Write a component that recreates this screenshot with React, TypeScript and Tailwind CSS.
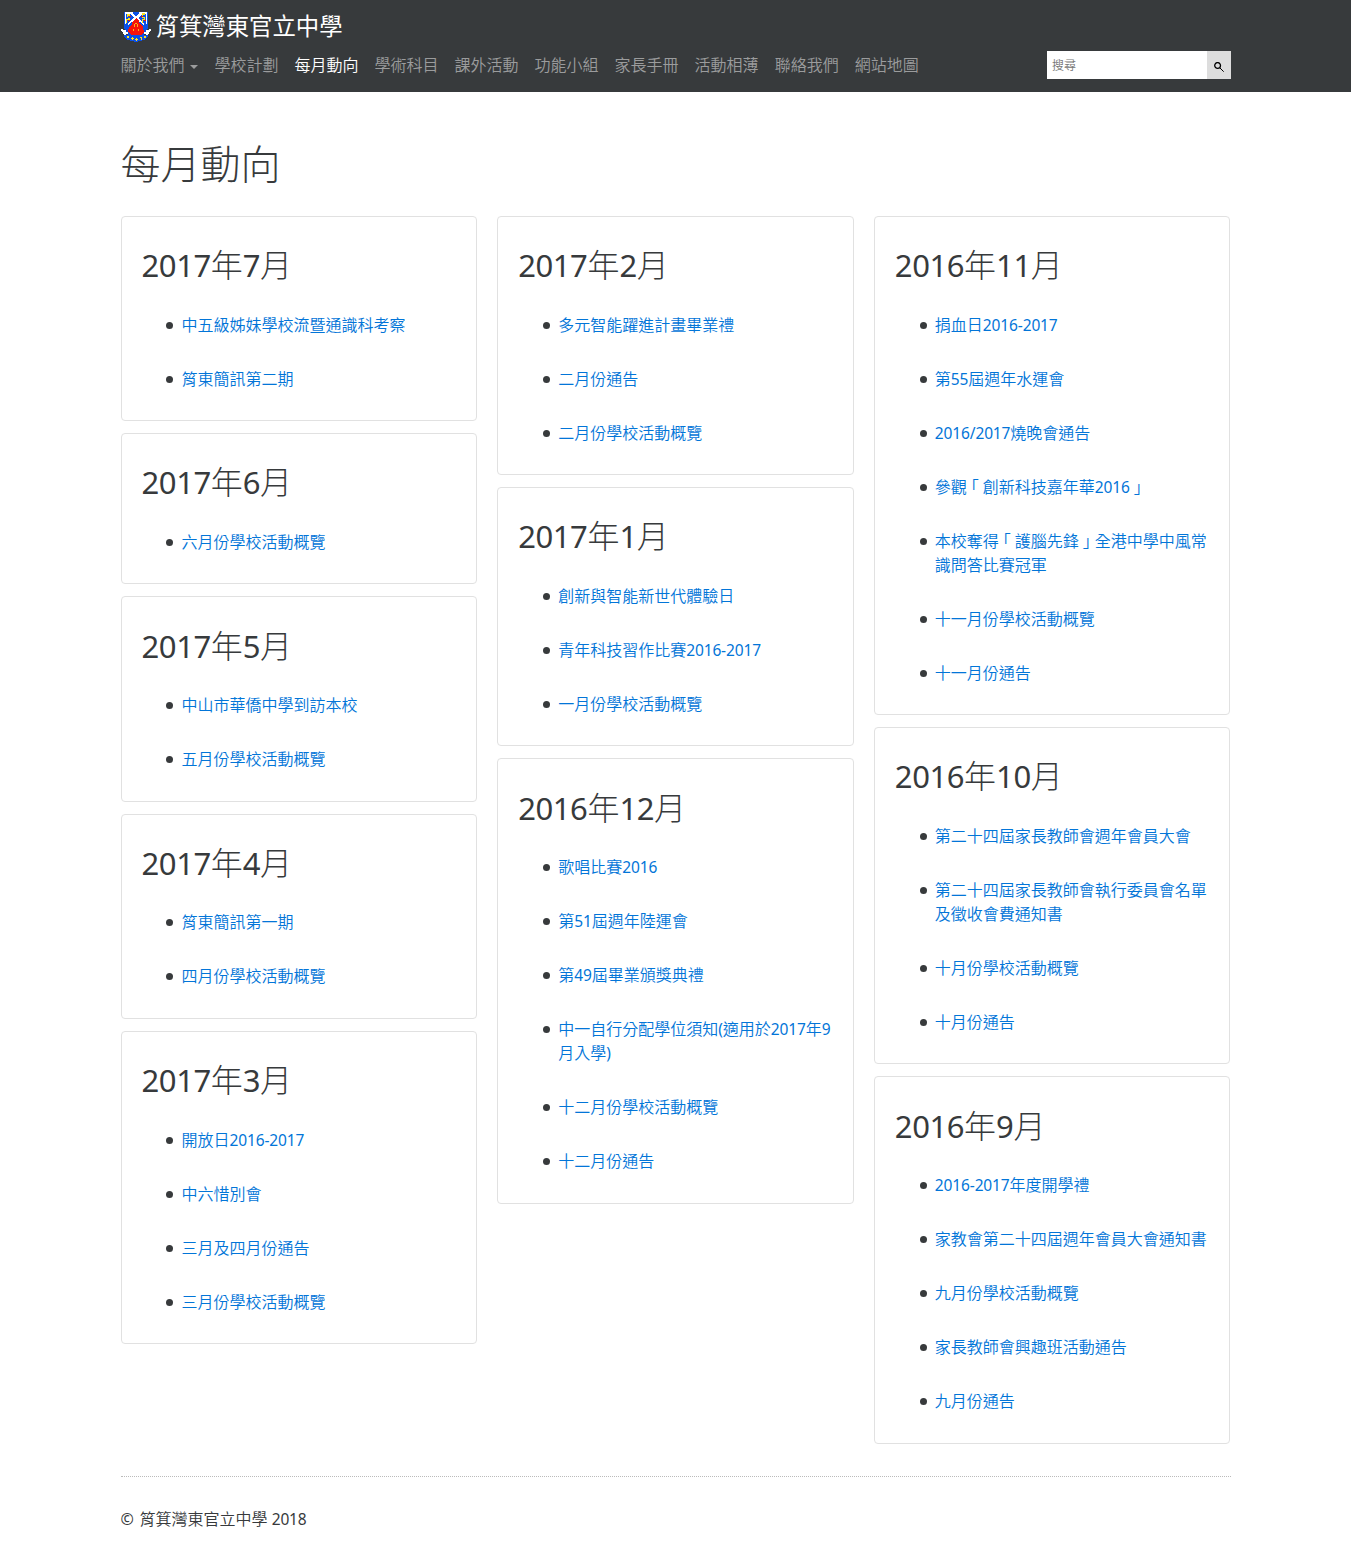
import React from "react";

type Month = { title: string; items: string[] };

const columns: Month[][] = [
  [
    { title: "2017年7月", items: ["中五級姊妹學校流暨通識科考察", "筲東簡訊第二期"] },
    { title: "2017年6月", items: ["六月份學校活動概覽"] },
    { title: "2017年5月", items: ["中山市華僑中學到訪本校", "五月份學校活動概覽"] },
    { title: "2017年4月", items: ["筲東簡訊第一期", "四月份學校活動概覽"] },
    { title: "2017年3月", items: ["開放日2016-2017", "中六惜別會", "三月及四月份通告", "三月份學校活動概覽"] },
  ],
  [
    { title: "2017年2月", items: ["多元智能躍進計畫畢業禮", "二月份通告", "二月份學校活動概覽"] },
    { title: "2017年1月", items: ["創新與智能新世代體驗日", "青年科技習作比賽2016-2017", "一月份學校活動概覽"] },
    {
      title: "2016年12月",
      items: [
        "歌唱比賽2016",
        "第51屆週年陸運會",
        "第49屆畢業頒獎典禮",
        "中一自行分配學位須知(適用於2017年9月入學)",
        "十二月份學校活動概覽",
        "十二月份通告",
      ],
    },
  ],
  [
    {
      title: "2016年11月",
      items: [
        "捐血日2016-2017",
        "第55屆週年水運會",
        "2016/2017燒晚會通告",
        "參觀「創新科技嘉年華2016」",
        "本校奪得「護腦先鋒」全港中學中風常識問答比賽冠軍",
        "十一月份學校活動概覽",
        "十一月份通告",
      ],
    },
    {
      title: "2016年10月",
      items: [
        "第二十四屆家長教師會週年會員大會",
        "第二十四屆家長教師會執行委員會名單及徵收會費通知書",
        "十月份學校活動概覽",
        "十月份通告",
      ],
    },
    {
      title: "2016年9月",
      items: [
        "2016-2017年度開學禮",
        "家教會第二十四屆週年會員大會通知書",
        "九月份學校活動概覽",
        "家長教師會興趣班活動通告",
        "九月份通告",
      ],
    },
  ],
];

const nav = ["關於我們", "學校計劃", "每月動向", "學術科目", "課外活動", "功能小組", "家長手冊", "活動相薄", "聯絡我們", "網站地圖"];

// Latin runs are set slightly tighter than the CJK text around them,
// and corner brackets use half-width glyphs centred in a full cell.
function Mixed({ text }: { text: string }) {
  return (
    <>
      {text.split(/([0-9\-/()]+|「|」)/).map((part, i) => {
        if (i % 2 === 0) return <React.Fragment key={i}>{part}</React.Fragment>;
        if (part === "「" || part === "」")
          return (
            <span key={i} className="inline-block w-4 text-center leading-5 [font-feature-settings:'halt']">{part}</span>
          );
        return (
          <span key={i} className="text-[0.97em] font-normal tracking-[-0.009em]">{part}</span>
        );
      })}
    </>
  );
}

function Crest() {
  return (
    <svg width="30" height="31" viewBox="0 0 30 31" shapeRendering="crispEdges">
      <path d="M3 1h24v16q-2 8-12 11Q5 25 3 17z" fill="#0b50e6" />
      <path d="M4 1h8v2H4zM18 1h8v2h-8zM4 3h1v10H4zM25 3h1v10h-1z" fill="#fff" />
      <path d="M10 1l5 4 5-4h3l-6 6 6 5v2l-8-6-8 6v-2l6-5-6-6z" fill="#fff" />
      <path d="M12 1h6l-3 3zM5 3h4v1H5zM21 3h4v1h-4z" fill="#0b50e6" />
      <path d="M6 3h3v2H7v2h2v2H6v3H5V8h2V6H6zM21 2h3v2h-2v2h2v3h-2v3h-1V8h2V7h-2z" fill="#ffe21a" />
      <path d="M8 5h2v1H8zM7 9h2v1H7zM20 5h2v1h-2zM23 9h2v1h-2z" fill="#e8120c" />
      <path d="M15 7l3 3 1 3 3 3 1 5-3 3H10l-3-3 1-5 3-3 1-3z" fill="#f5130a" />
      <path d="M14 12h2v1h-2zM13 13h1v3h-1zM16 13h1v3h-1zM12 18h1v2h-1zM17 18h1v2h-1z" fill="#ffb01a" />
      <path d="M0 18h2v1h3v2h2v2H5v1H3v-1H2v-2H1v-1H0zM30 18h-2v1h-3v2h-2v2h2v1h2v-1h1v-2h1v-1h1z" fill="#fff" />
      <path d="M3 24h4l3 1h10l3-1h4v2l-4 3-4 1-4 1-4-1-4-1-4-3z" fill="#0b50e6" />
      <path d="M6 25h2v2H6zM10 27h3v1h-3zM11 26h1v3h-1zM15 27h1v3h-1zM14 28h3v1h-3zM19 26h2v1h-2zM20 27h1v2h-1zM23 25h2v2h-2z" fill="#ffe21a" />
    </svg>
  );
}

function MonthCard({ title, items }: Month) {
  return (
    <section className="mb-3 rounded border border-[#e1e1e1] px-5 pt-5 pb-[29.4px]">
      <h2 className="mt-[10.3px] text-[32px] leading-[35.2px] font-light">
        {title.split(/([0-9]+)/).map((p, i) =>
          i % 2 ? (
            <span key={i} className="text-[0.97em] font-normal tracking-[-0.014em]">{p}</span>
          ) : (
            <React.Fragment key={i}>{p}</React.Fragment>
          ),
        )}
      </h2>
      <ul className="mt-[29.3px] flex flex-col gap-[30px] pl-10">
        {items.map((item) => (
          <li key={item} className="relative">
            <span className="absolute top-[9px] -left-[15.3px] size-[7px] rounded-full bg-[#373a3c]" />
            <a href="#" className="block break-all text-[#0275d8]">
              <Mixed text={item} />
            </a>
          </li>
        ))}
      </ul>
    </section>
  );
}

export default function App() {
  return (
    <div
      lang="zh-Hant"
      className="min-h-[1561px] bg-white font-['Noto_Sans','Noto_Sans_CJK_TC',sans-serif] text-base leading-6 font-[350] text-[#373a3c]"
    >
      <header className="h-[92px] bg-[#373a3c]">
        <div className="mx-auto w-[1110px]">
          <a href="#" className="flex h-[50px] items-start pt-[11px] text-white">
            <Crest />
            <span className="ml-[5px] text-[23.4px] leading-[31px] font-normal whitespace-nowrap">筲箕灣東官立中學</span>
          </a>
          <div className="flex items-start justify-between">
            <nav className="flex gap-4 pt-[3px] whitespace-nowrap">
              {nav.map((label, i) => (
                <a key={label} href="#" className={i === 2 ? "flex items-center text-white" : "flex items-center text-[#9b9c9d]"}>
                  {label}
                  {i === 0 && (
                    <span className="mt-[4px] mr-px ml-[5px] border-x-[4px] border-t-[4px] border-x-transparent border-t-[#9b9c9d]" />
                  )}
                </a>
              ))}
            </nav>
            <form className="mt-px flex h-7" onSubmit={(e) => e.preventDefault()}>
              <input
                placeholder="搜尋"
                className="w-40 bg-white pt-[2px] pr-[5px] pl-[5.5px] text-xs text-[#373a3c] outline-none placeholder:text-[#757575]"
              />
              <button className="flex w-6 items-center justify-center bg-[#ddd]">
                <svg width="10" height="10" viewBox="0 0 10 10" fill="none" stroke="#000" className="mt-[3px]">
                  <circle cx="3.6" cy="3.5" r="2.9" strokeWidth="1.3" />
                  <path d="M6 6l3.7 3.7" strokeWidth="1" />
                </svg>
              </button>
            </form>
          </div>
        </div>
      </header>
      <main className="mx-auto w-[1110px]">
        <h1 className="pt-[50px] text-[40px] leading-[44px] font-light">每月動向</h1>
        <div className="mt-[30px] grid grid-cols-3 gap-x-5">
          {columns.map((months, i) => (
            <div key={i}>
              {months.map((m) => (
                <MonthCard key={m.title} {...m} />
              ))}
            </div>
          ))}
        </div>
        <footer className="mt-[20.2px] border-t border-dotted border-[#bbb] pt-[30px]">
          <p>
            <span className="mr-[1.5px] font-normal">©</span> 筲箕灣東官立中學 <Mixed text="2018" />
          </p>
        </footer>
      </main>
    </div>
  );
}
